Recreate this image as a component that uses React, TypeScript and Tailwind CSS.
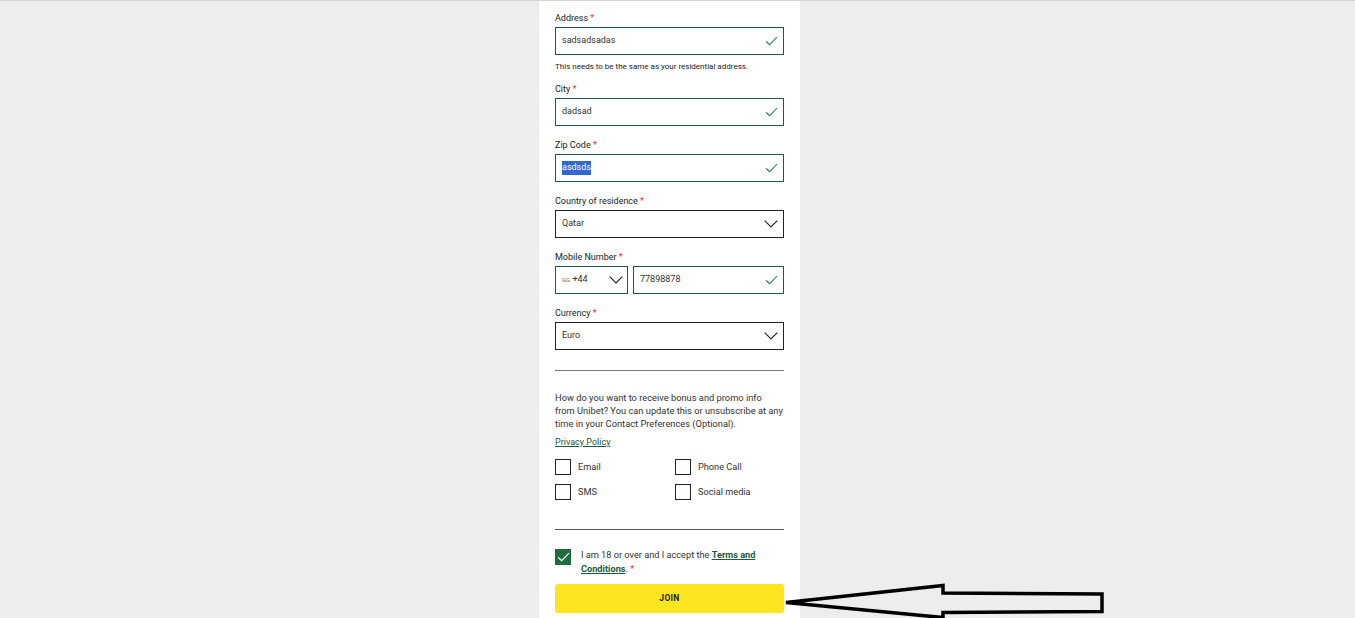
import React from "react";

const Check = ({ className = "" }: { className?: string }) => (
  <svg className={className} width="13" height="10" viewBox="0 0 13 10" fill="none">
    <path d="M1 5.2 L4.6 8.7 L12 1.2" stroke="currentColor" strokeWidth="1.2" />
  </svg>
);

const Chevron = () => (
  <svg width="14" height="8" viewBox="0 0 14 8" fill="none" className="text-[#222]">
    <path d="M0.7 0.7 L7 7 L13.3 0.7" stroke="currentColor" strokeWidth="1.1" />
  </svg>
);

const Label = ({ children }: { children: React.ReactNode }) => (
  <div className="h-[12px] text-[9px] leading-[12px] text-[#222]">
    {children} <span className="text-[#e0313f]">*</span>
  </div>
);

const ValidInput = ({ value, selected }: { value: string; selected?: boolean }) => (
  <div className="mt-[3px] flex h-[28px] items-center justify-between border border-[#1e5a3c] pl-[6px] pr-[5px] text-[9px] text-[#333]">
    {selected ? <span className="bg-[#3367d0] text-white">{value}</span> : <span>{value}</span>}
    <Check className="text-[#3a8a5b]" />
  </div>
);

const Select = ({ value }: { value: string }) => (
  <div className="mt-[3px] flex h-[28px] items-center justify-between border border-[#222] pl-[6px] pr-[5px] text-[9px] text-[#333]">
    <span>{value}</span>
    <Chevron />
  </div>
);

const Box = ({ label }: { label: string }) => (
  <div className="flex h-[16px] items-center gap-[7px]">
    <div className="h-[16px] w-[16px] border border-[#222]" />
    <span className="text-[9.2px] text-[#333]">{label}</span>
  </div>
);

export default function App() {
  return (
    <div
      className="relative h-[618px] w-[1355px] overflow-hidden border-t border-[#d4d4d4] bg-[#ededed]"
      style={{ fontFamily: "Roboto, 'Liberation Sans', Arial, sans-serif" }}
    >
      <div className="ml-[539px] min-h-[700px] w-[261px] bg-white px-[16px] pt-[11px]">
        <Label>Address</Label>
        <ValidInput value="sadsadsadas" />
        <div className="mt-[6px] h-[11px] text-[8px] leading-[11px] text-[#222]">
          This needs to be the same as your residential address.
        </div>
        <div className="mt-[11px]">
          <Label>City</Label>
          <ValidInput value="dadsad" />
        </div>
        <div className="mt-[13px]">
          <Label>Zip Code</Label>
          <ValidInput value="asdsds" selected />
        </div>
        <div className="mt-[13px]">
          <Label>Country of residence</Label>
          <Select value="Qatar" />
        </div>
        <div className="mt-[13px]">
          <Label>Mobile Number</Label>
          <div className="mt-[3px] flex gap-[5px]">
            <div className="flex h-[28px] w-[73px] items-center justify-between border border-[#1e5a3c] pl-[6px] pr-[4px] text-[#333]">
              <span className="text-[9px]">
                <span className="text-[6px] text-[#666]">GG</span> +44
              </span>
              <Chevron />
            </div>
            <div className="flex h-[28px] flex-1 items-center justify-between border border-[#1e5a3c] pl-[6px] pr-[5px] text-[9px] text-[#333]">
              <span>77898878</span>
              <Check className="text-[#3a8a5b]" />
            </div>
          </div>
        </div>
        <div className="mt-[13px]">
          <Label>Currency</Label>
          <Select value="Euro" />
        </div>
        <div className="mt-[20px] h-px bg-[#777]" />
        <p className="mt-[20px] whitespace-nowrap text-[9.3px] leading-[13px] text-[#333]">
          How do you want to receive bonus and promo info
          <br />
          from Unibet? You can update this or unsubscribe at any
          <br />
          time in your Contact Preferences (Optional).
        </p>
        <div className="mt-[6px] text-[9px] leading-[13px] text-[#1e5a3c] underline">Privacy Policy</div>
        <div className="mt-[10px] grid grid-cols-[120px_1fr] gap-y-[9px]">
          <Box label="Email" />
          <Box label="Phone Call" />
          <Box label="SMS" />
          <Box label="Social media" />
        </div>
        <div className="mt-[29px] h-px bg-[#555]" />
        <div className="mt-[19px] flex gap-[10px]">
          <div className="flex h-[16px] w-[16px] shrink-0 items-center justify-center bg-[#1e6b3f]">
            <Check className="text-white" />
          </div>
          <div className="-mt-[1.5px] text-[9.2px] leading-[14px] text-[#333]">
            I am 18 or over and I accept the{" "}
            <span className="font-bold text-[#1e5a3c] underline">Terms and Conditions</span>.{" "}
            <span className="text-[#e0313f]">*</span>
          </div>
        </div>
        <div className="mt-[8px] flex h-[29px] items-center justify-center rounded-[3px] bg-[#fde51f] text-[8.5px] font-bold tracking-[0.3px] text-[#222]">
          JOIN
        </div>
      </div>
      <svg
        className="absolute left-[780px] top-[578px]"
        width="330"
        height="45"
        viewBox="780 578 330 45"
        fill="none"
      >
        <polygon
          points="786,601.5 943,584.5 943,592 1102,593 1102,610.5 943,611.5 943,616.5"
          fill="#ededed"
          stroke="#000"
          strokeWidth="3.5"
          strokeLinejoin="miter"
        />
      </svg>
    </div>
  );
}
